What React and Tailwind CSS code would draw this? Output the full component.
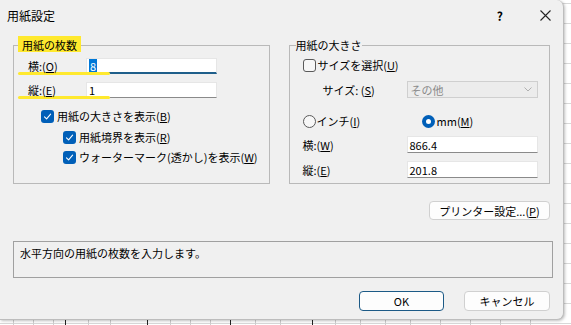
import React from "react";

const U = ({ children }) => <span className="underline underline-offset-[1px]">{children}</span>;

function Check({ checked }) {
  if (checked) {
    return (
      <span className="flex h-[13px] w-[13px] shrink-0 items-center justify-center rounded-[3px] bg-[#005fb8]">
        <svg width="9" height="9" viewBox="0 0 9 9" fill="none">
          <path d="M1.5 4.8 L3.6 6.8 L7.6 2.2" stroke="white" strokeWidth="1.1" strokeLinecap="round" strokeLinejoin="round" />
        </svg>
      </span>
    );
  }
  return <span className="h-[13px] w-[13px] shrink-0 rounded-[3px] border border-[#5a5a5a] bg-[#f7f7f7]" />;
}

function Radio({ checked }) {
  if (checked) {
    return (
      <span className="flex h-[13px] w-[13px] shrink-0 items-center justify-center rounded-full bg-[#005fb8]">
        <span className="h-[5px] w-[5px] rounded-full bg-white" />
      </span>
    );
  }
  return <span className="h-[13px] w-[13px] shrink-0 rounded-full border border-[#5a5a5a] bg-[#f7f7f7]" />;
}

function Input({ value, w = "w-[131px]", h = "h-[16px]" }) {
  return (
    <div className={`${w} ${h} flex items-center border border-[#e6e6e6] border-b-[#8a8a8a] bg-white pl-[2px]`}>
      {value}
    </div>
  );
}

export default function App() {
  const hLines = [];
  for (let y = 3; y < 325; y += 20) hLines.push(y);
  const vLines = [13, 33, 53, 65, 88, 110, 147, 170, 190, 210, 230, 255, 280, 312, 335, 360, 385, 410, 440, 470, 500, 530];
  return (
    <div
      className="relative h-[325px] w-[571px] overflow-hidden bg-white text-[11px] leading-[14px] text-black"
      style={{ fontFamily: '"Noto Sans CJK JP", "Noto Sans", sans-serif' }}
    >
      {/* spreadsheet background */}
      {hLines.map((y) => (
        <div key={y} className="absolute left-0 h-px w-full bg-[#d8d8d8]" style={{ top: y }} />
      ))}
      {vLines.map((x) => (
        <div
          key={x}
          className={`absolute bottom-0 h-[10px] w-px ${[65, 147, 230, 312].includes(x) ? "bg-[#222]" : "bg-[#cfcfcf]"}`}
          style={{ left: x }}
        />
      ))}

      {/* dialog window */}
      <div className="absolute left-0 top-0 flex h-[320px] w-[564px] flex-col rounded-r-[7px] border-r border-b border-[#bdbdbd] bg-[#f0f0f0] shadow-[1px_1px_3px_rgba(0,0,0,0.25)]">
        {/* title bar */}
        <div className="flex h-[31px] shrink-0 items-center pl-[7px] text-[12px]">
          <span>用紙設定</span>
          <span className="ml-auto mr-[37px] text-[12px] font-bold">?</span>
          <svg className="mr-[12px]" width="11" height="11" viewBox="0 0 11 11">
            <path d="M0.5 0.5 L10.5 10.5 M10.5 0.5 L0.5 10.5" stroke="#222" strokeWidth="1.1" />
          </svg>
        </div>

        <div className="relative flex flex-col px-[13px] pt-[6px]">
          <div className="flex gap-[19px]">
            {/* left group */}
            <fieldset className="relative h-[147px] w-[258px] border border-[#b9b9b9] p-0">
              <legend className="relative ml-[8px] px-0 leading-[16px]">
                <span className="absolute -left-[4px] -top-[1px] h-[16px] w-[63px] bg-[#ffe92e]" />
                <span className="relative">用紙の枚数</span>
              </legend>
              <div className="pl-[14px]">
                <div className="mt-[5px] flex h-[16px] items-center">
                  <span className="relative w-[58px]">
                    <span className="absolute -left-[10px] top-[13px] h-[3px] w-[92px] rounded-full bg-[#ffe92e]" />
                    <span className="relative">横:(<U>O</U>)</span>
                  </span>
                  <div className="flex h-[16px] w-[131px] items-center border border-[#e6e6e6] border-b-2 border-b-[#1f5f8b] bg-white pl-[2px]">
                    <span className="bg-[#0078d7] px-[1px] text-white">8</span>
                  </div>
                </div>
                <div className="mt-[8px] flex h-[16px] items-center">
                  <span className="relative w-[58px]">
                    <span className="absolute -left-[10px] top-[13px] h-[3px] w-[92px] rounded-full bg-[#ffe92e]" />
                    <span className="relative">縦:(<U>E</U>)</span>
                  </span>
                  <Input value="1" />
                </div>
                <div className="mt-[8px] flex h-[20px] items-center gap-[3px] pl-[13px]">
                  <Check checked />
                  <span>用紙の大きさを表示(<U>B</U>)</span>
                </div>
                <div className="mt-[1px] flex h-[20px] items-center gap-[3px] pl-[35px]">
                  <Check checked />
                  <span>用紙境界を表示(<U>R</U>)</span>
                </div>
                <div className="flex h-[20px] items-center gap-[3px] pl-[35px]">
                  <Check checked />
                  <span>ウォーターマーク(透かし)を表示(<U>W</U>)</span>
                </div>
              </div>
            </fieldset>

            {/* right group */}
            <fieldset className="h-[147px] w-[263px] border border-[#b9b9b9] p-0">
              <legend className="ml-[6px] px-0 leading-[16px]">用紙の大きさ</legend>
              <div className="pl-[13px]">
                <div className="mt-[2px] flex h-[20px] items-center gap-[2px]">
                  <Check />
                  <span>サイズを選択(<U>U</U>)</span>
                </div>
                <div className="mt-[6px] flex h-[17px] items-center">
                  <span className="w-[104px] pl-[20px]">サイズ: (<U>S</U>)</span>
                  <div className="flex h-[17px] w-[131px] items-center border border-[#cfcfcf] bg-[#ececec] pl-[3px] text-[#8a8a8a]">
                    <span>その他</span>
                    <svg className="ml-auto mr-[5px]" width="8" height="5" viewBox="0 0 8 5">
                      <path d="M0.5 0.5 L4 4 L7.5 0.5" fill="none" stroke="#b0b0b0" strokeWidth="1" />
                    </svg>
                  </div>
                </div>
                <div className="mt-[13px] flex h-[20px] items-center">
                  <div className="flex w-[119px] items-center gap-[1px]">
                    <Radio />
                    <span>インチ(<U>I</U>)</span>
                  </div>
                  <div className="flex items-center gap-[2px]">
                    <Radio checked />
                    <span>mm(<U>M</U>)</span>
                  </div>
                </div>
                <div className="mt-[5px] flex h-[17px] items-center">
                  <span className="w-[104px]">横:(<U>W</U>)</span>
                  <Input value="866.4" h="h-[17px]" />
                </div>
                <div className="mt-[8px] flex h-[17px] items-center">
                  <span className="w-[104px]">縦:(<U>E</U>)</span>
                  <Input value="201.8" h="h-[17px]" />
                </div>
              </div>
            </fieldset>
          </div>

          <div className="mt-[17px] flex justify-end">
            <button className="flex h-[19px] w-[121px] items-center justify-center rounded-[4px] border border-[#d0d0d0] bg-[#fdfdfd]">
              プリンター設定...(<U>P</U>)
            </button>
          </div>

          <div className="mt-[21px] h-[37px] w-[540px] border border-[#a0a0a0] pl-[6px] pt-[4px]">
            水平方向の用紙の枚数を入力します。
          </div>

          <div className="mt-[13px] flex justify-end gap-[20px]">
            <button className="flex h-[20px] w-[85px] items-center justify-center rounded-[4px] border border-[#1c5a86] bg-[#fdfdfd]">
              OK
            </button>
            <button className="flex h-[20px] w-[86px] items-center justify-center rounded-[4px] border border-[#d0d0d0] bg-[#fdfdfd]">
              キャンセル
            </button>
          </div>
        </div>
      </div>
    </div>
  );
}
